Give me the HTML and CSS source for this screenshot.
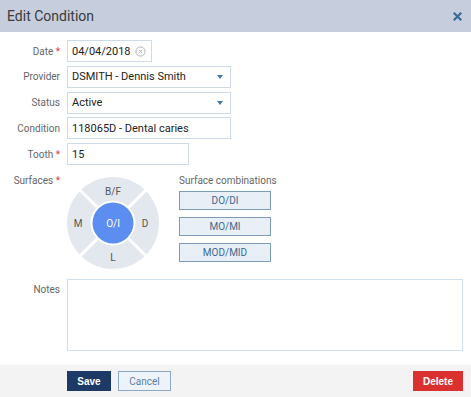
FILE: index.html
```html
<!DOCTYPE html>
<html lang="en">
<head>
    <meta charset="UTF-8">
    <title>Edit Condition</title>
    <link rel="stylesheet" href="styles.css">
</head>
<body>
    <div class="modal">
        <div class="modal-header">
            <span class="modal-title">Edit Condition</span>
            <button class="close-btn">
                <svg width="9" height="9" viewBox="0 0 9 9"><path d="M1.5 1.5 L7.5 7.5 M7.5 1.5 L1.5 7.5" stroke="#3b6b94" stroke-width="2.2" stroke-linecap="square"/></svg>
            </button>
        </div>
        <div class="modal-body">
            <div class="form-row">
                <label class="form-label">Date <span class="req">*</span></label>
                <div class="field field-date">
                    <span class="value">04/04/2018</span>
                    <svg class="clear-icon" width="11" height="11" viewBox="0 0 11 11"><circle cx="5.5" cy="5.5" r="4.6" fill="none" stroke="#b5b5b5" stroke-width="1"/><path d="M3.8 3.8 L7.2 7.2 M7.2 3.8 L3.8 7.2" stroke="#b5b5b5" stroke-width="1"/></svg>
                </div>
            </div>
            <div class="form-row">
                <label class="form-label">Provider</label>
                <div class="field field-wide">
                    <span class="value">DSMITH - Dennis Smith</span>
                    <span class="caret"></span>
                </div>
            </div>
            <div class="form-row">
                <label class="form-label">Status</label>
                <div class="field field-wide">
                    <span class="value">Active</span>
                    <span class="caret"></span>
                </div>
            </div>
            <div class="form-row">
                <label class="form-label">Condition</label>
                <div class="field field-wide">
                    <span class="value">118065D - Dental caries</span>
                </div>
            </div>
            <div class="form-row">
                <label class="form-label">Tooth <span class="req">*</span></label>
                <div class="field field-tooth">
                    <span class="value">15</span>
                </div>
            </div>
            <div class="form-row surfaces-row">
                <label class="form-label">Surfaces <span class="req">*</span></label>
                <div class="surfaces">
                    <svg class="tooth-map" width="92" height="92" viewBox="0 0 92 92">
                        <circle cx="46" cy="46" r="46" fill="#e3e7ee"/>
                        <path d="M13 13 L79 79 M79 13 L13 79" stroke="#fff" stroke-width="3"/>
                        <circle cx="46" cy="46" r="22.5" fill="#fff"/>
                        <circle cx="46" cy="46" r="20.5" fill="#5b8ef0"/>
                        <text x="46" y="18" class="surface-text">B/F</text>
                        <text x="46" y="84" class="surface-text">L</text>
                        <text x="11" y="50" class="surface-text">M</text>
                        <text x="78" y="50" class="surface-text">D</text>
                        <text x="46" y="50" class="surface-text active">O/I</text>
                    </svg>
                    <div class="combos">
                        <div class="combos-title">Surface combinations</div>
                        <button class="combo-btn">DO/DI</button>
                        <button class="combo-btn">MO/MI</button>
                        <button class="combo-btn">MOD/MID</button>
                    </div>
                </div>
            </div>
            <div class="form-row notes-row">
                <label class="form-label">Notes</label>
                <div class="notes"></div>
            </div>
        </div>
        <div class="modal-footer">
            <div class="footer-left">
                <button class="btn btn-save">Save</button>
                <button class="btn btn-cancel">Cancel</button>
            </div>
            <button class="btn btn-delete">Delete</button>
        </div>
    </div>
</body>
</html>
```

FILE: styles.css
```css
* {
    margin: 0;
    padding: 0;
    box-sizing: border-box;
}

body {
    background: #fff;
    width: 471px;
    height: 397px;
    overflow: hidden;
    font-family: Roboto, "Liberation Sans", sans-serif;
    font-size: 11px;
    color: #222;
}

.modal {
    height: 397px;
    display: flex;
    flex-direction: column;
}

.modal-header {
    height: 32px;
    flex-shrink: 0;
    background: #c6cedd;
    display: flex;
    align-items: center;
    justify-content: space-between;
    padding: 0 8px 0 7px;
}

.modal-title {
    font-size: 14px;
    color: #3a3a3a;
}

.close-btn {
    border: none;
    background: transparent;
    width: 12px;
    height: 12px;
    display: flex;
    align-items: center;
    justify-content: center;
}

.modal-body {
    flex: 1;
    padding-top: 8px;
    padding-right: 8px;
    display: flex;
    flex-direction: column;
}

.form-row {
    display: grid;
    grid-template-columns: 60px 1fr;
    column-gap: 7px;
    align-items: center;
    margin-bottom: 3.75px;
}

.form-label {
    text-align: right;
    color: #666;
    font-size: 10px;
}

.req {
    color: #e03a3a;
}

.field {
    height: 22px;
    border: 1px solid #cddbe9;
    display: flex;
    align-items: center;
    padding: 0 6px 0 4px;
    background: #fff;
}

.field .value {
    flex: 1;
}

.field-date {
    width: 85px;
}

.field-wide {
    width: 164px;
}

.field-tooth {
    width: 122px;
}

.clear-icon {
    margin-right: -1px;
}

.caret {
    width: 0;
    height: 0;
    border-left: 3.5px solid transparent;
    border-right: 3.5px solid transparent;
    border-top: 4px solid #3f79b3;
    margin-right: 1px;
}

.surfaces-row {
    align-items: start;
    margin-top: 6px;
    margin-bottom: 10px;
}

.surfaces {
    display: flex;
    gap: 20px;
}

.tooth-map {
    margin-top: 2px;
}

.surface-text {
    font-family: Roboto, "Liberation Sans", sans-serif;
    font-size: 10px;
    fill: #555;
    text-anchor: middle;
}

.surface-text.active {
    fill: #fff;
}

.combos {
    display: flex;
    flex-direction: column;
    gap: 7px;
}

.combos-title {
    color: #666;
    font-size: 10px;
    margin-bottom: -2px;
}

.combo-btn {
    width: 92px;
    height: 19px;
    background: #e9eff7;
    border: 1px solid #7e9cb9;
    color: #3d6990;
    font-family: inherit;
    font-size: 10px;
}

.notes-row {
    align-items: start;
    margin-bottom: 0;
}

.notes-row .form-label {
    padding-top: 5px;
}

.notes {
    height: 72px;
    border: 1px solid #cfe0ee;
}

.modal-footer {
    height: 32px;
    flex-shrink: 0;
    background: #f3f3f3;
    display: flex;
    align-items: center;
    justify-content: space-between;
    padding: 0 8px 0 67px;
}

.footer-left {
    display: flex;
    gap: 7px;
}

.btn {
    height: 20px;
    font-family: "Liberation Sans", Arial, sans-serif;
    font-size: 10px;
    border: 1px solid transparent;
}

.btn-save {
    width: 44px;
    background: #1d3966;
    color: #fff;
    font-weight: bold;
}

.btn-cancel {
    width: 53px;
    background: #eef3f9;
    border-color: #8ca8c3;
    color: #5a7fa3;
    font-family: Roboto, sans-serif;
}

.btn-delete {
    width: 50px;
    background: #da3030;
    color: #fff;
    font-weight: bold;
}
```
